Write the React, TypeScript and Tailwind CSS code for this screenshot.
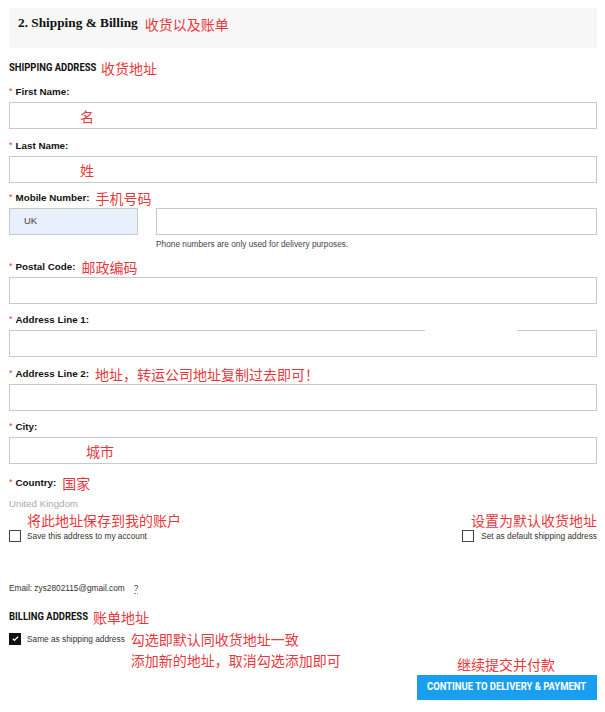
import type { ReactNode } from 'react'

const red = "font-['Noto_Sans_CJK_SC',sans-serif] text-[14px] text-[#e8383d]"
const zh = `${red} leading-none`
const narrow = "font-['Roboto',sans-serif] font-bold whitespace-nowrap"

function Label({ text, note }: { text: string; note?: string }) {
  return (
    <div className="flex h-[20px] items-center">
      <span className="mr-[3px] text-[9px] text-[#e8383d]">*</span>
      <span className="text-[9.8px] font-bold text-[#111]">{text}:</span>
      {note && <span className={`${zh} ml-[6px]`}>{note}</span>}
    </div>
  )
}

function Field({ label, note, inside, insideLeft, className = '', children }: {
  label: string
  note?: string
  inside?: string
  insideLeft?: string
  className?: string
  children?: ReactNode
}) {
  return (
    <div className={className}>
      <Label text={label} note={note} />
      <div className="relative flex h-[27px] items-center border border-[#c9c9c9] bg-white">
        {inside && <span className={`${zh} ${insideLeft}`}>{inside}</span>}
        {children}
      </div>
    </div>
  )
}

function Box({ checked = false }: { checked?: boolean }) {
  return checked ? (
    <span className="flex h-[12px] w-[12px] items-center justify-center bg-[#111]">
      <svg viewBox="0 0 12 12" className="h-[9px] w-[9px]" fill="none" stroke="white" strokeWidth={1.8}>
        <path d="M2.5 6.3l2.2 2.2 4.8-5" />
      </svg>
    </span>
  ) : (
    <span className="h-[12px] w-[12px] border border-[#444] bg-white" />
  )
}

// condensed section heading: Roboto squeezed horizontally
function Heading({ text, width }: { text: string; width: string }) {
  return (
    <span className={`inline-block ${width} text-[11px] text-[#111]`}>
      <span className={`${narrow} inline-block origin-left scale-x-[0.86]`}>{text}</span>
    </span>
  )
}

export default function App() {
  return (
    <div className="min-h-screen bg-white pl-[9px] pr-[8px] pt-[8px] font-['Liberation_Sans',Arial,sans-serif]">
      {/* Header */}
      <div className="flex h-[40px] items-start bg-[#f7f7f7] pl-[9px] pt-[7px]">
        <h2 className="font-['Liberation_Serif',serif] text-[13.3px] font-bold leading-[16px] text-[#111]">
          2. Shipping &amp; Billing
        </h2>
        <span className={`${zh} ml-[7px] mt-[2px]`}>收货以及账单</span>
      </div>

      <div className="mt-[11px] flex h-[18px] items-center">
        <Heading text="SHIPPING ADDRESS" width="w-[92px]" />
        <span className={zh}>收货地址</span>
      </div>

      <Field label="First Name" inside="名" insideLeft="ml-[70px]" className="mt-[5px]" />
      <Field label="Last Name" inside="姓" insideLeft="ml-[70px]" className="mt-[7px]" />

      {/* Mobile */}
      <div className="mt-[5px]">
        <Label text="Mobile Number" note="手机号码" />
        <div className="flex gap-[18px]">
          <div className="flex h-[27px] w-[129px] items-center border border-[#c9c9c9] bg-[#e8f0fe] pl-[14px] text-[9.5px] text-[#444]">
            UK
          </div>
          <div className="flex-1">
            <div className="h-[27px] border border-[#c9c9c9] bg-white" />
            <p className="mt-[4px] text-[8.3px] leading-[10px] text-[#444]">
              Phone numbers are only used for delivery purposes.
            </p>
          </div>
        </div>
      </div>

      <Field label="Postal Code" note="邮政编码" className="mt-[8px]" />
      <Field label="Address Line 1" className="mt-[6px]">
        <span className="absolute -top-px left-[415px] h-[3px] w-[92px] bg-white" />
      </Field>
      <Field label="Address Line 2" note="地址，转运公司地址复制过去即可！" className="mt-[7px]" />
      <Field label="City" inside="城市" insideLeft="ml-[76px]" className="mt-[6px]" />

      <div className="mt-[9px]">
        <Label text="Country" note="国家" />
        <p className="mt-[6px] text-[9.7px] leading-[10px] text-[#aaa]">United Kingdom</p>
      </div>

      {/* Save / default checkboxes */}
      <div className="mt-[1px] flex justify-between">
        <div>
          <div className={`${red} ml-[18px] h-[20px] leading-[20px]`}>将此地址保存到我的账户</div>
          <label className="flex items-center gap-[6px]">
            <Box />
            <span className="text-[8.3px] text-[#333]">Save this address to my account</span>
          </label>
        </div>
        <div className="flex flex-col items-end">
          <div className={`${red} h-[20px] leading-[20px]`}>设置为默认收货地址</div>
          <label className="flex items-center gap-[7px]">
            <Box />
            <span className="text-[8.3px] text-[#333]">Set as default shipping address</span>
          </label>
        </div>
      </div>

      <div className="mt-[40px] flex items-center text-[8.3px] text-[#333]">
        <span>Email: zys2802115@gmail.com</span>
        <span className="ml-[9px] border-b border-dotted border-[#999] leading-[10px]">?</span>
      </div>

      <div className="mt-[13px] flex h-[18px] items-center">
        <Heading text="BILLING ADDRESS" width="w-[84px]" />
        <span className={zh}>账单地址</span>
      </div>

      <div className="mt-[3px] flex">
        <label className="flex h-[20px] items-center gap-[6px] self-start">
          <Box checked />
          <span className="text-[8.3px] text-[#333]">Same as shipping address</span>
        </label>
        <div className={`${red} ml-[6px] leading-[21px]`}>
          <div>勾选即默认同收货地址一致</div>
          <div>添加新的地址，取消勾选添加即可</div>
        </div>
      </div>

      <div className="-mt-[14px] flex flex-col items-end">
        <div className={`${zh} mr-[42px] h-[18px]`}>继续提交并付款</div>
        <button className="flex h-[25px] w-[180px] items-center justify-center bg-[#1a9ff0] text-[11px] text-white">
          <span className={`${narrow} inline-block scale-x-[0.86]`}>CONTINUE TO DELIVERY &amp; PAYMENT</span>
        </button>
      </div>
    </div>
  )
}
